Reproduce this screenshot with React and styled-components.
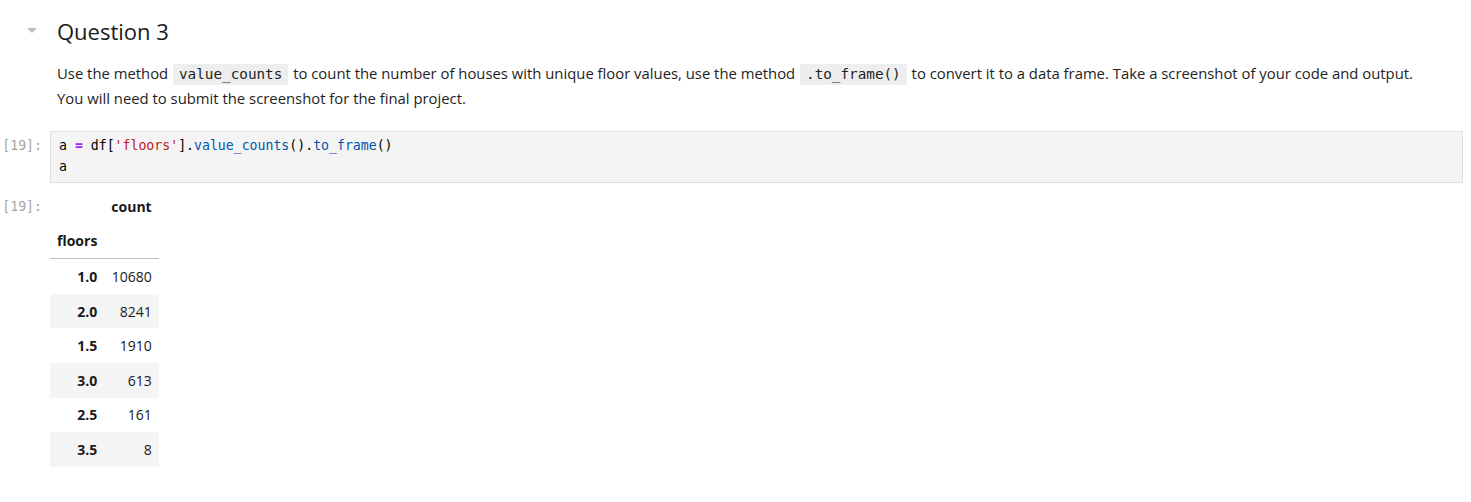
import React from "react";
import styled, { createGlobalStyle } from "styled-components";

const Global = createGlobalStyle`
  html, body { margin: 0; padding: 0; background: #fff; }
  body { font-family: "Open Sans", "Noto Sans", sans-serif; color: #212121; }
`;

const Notebook = styled.div`
  display: flex;
  flex-direction: column;
  padding: 0 8px 0 0;
`;

const HeadingRow = styled.div`
  display: flex;
  align-items: center;
  height: 61px;
`;

const Collapser = styled.div`
  width: 57px;
  display: flex;
  justify-content: flex-start;
  padding-left: 26px;
  box-sizing: border-box;
`;

const Heading = styled.h2`
  margin: 0;
  font-size: 22px;
  font-weight: 500;
  color: #1a1a1a;
`;

const Para = styled.p`
  margin: 0 0 0 57px;
  font-size: 14.85px;
  line-height: 25px;
  color: #1e1e1e;
`;

const InlineCode = styled.code`
  font-family: "DejaVu Sans Mono", monospace;
  font-size: 14.3px;
  line-height: 1;
  background: #eeeeee;
  padding: 2px 6px 3px;
  margin: 0 1px;
`;

const CellRow = styled.div`
  display: flex;
  align-items: flex-start;
  margin-top: ${(p) => p.$top}px;
`;

const Prompt = styled.div`
  width: 50px;
  flex: none;
  box-sizing: border-box;
  padding-right: 8px;
  text-align: right;
  font-family: "DejaVu Sans Mono", monospace;
  font-size: 13.2px;
  color: #a5a5a5;
  line-height: 21px;
  padding-top: ${(p) => p.$pt}px;
`;

const Editor = styled.pre`
  flex: 1;
  margin: 0;
  background: #f4f4f4;
  border: 1px solid #e0e0e0;
  padding: 3px 8px 5px;
  font-family: "DejaVu Sans Mono", monospace;
  font-size: 13.2px;
  line-height: 21px;
  color: #000;
`;

const Op = styled.span`
  color: #aa22ff;
  font-weight: bold;
`;
const Str = styled.span`
  color: #ba2121;
`;
const Prop = styled.span`
  color: #0055aa;
`;

const Table = styled.table`
  border-collapse: collapse;
  font-size: 14px;
  font-family: "Open Sans", sans-serif;
  color: #1a1a1a;
`;

const Th = styled.th`
  text-align: right;
  font-weight: 700;
  padding: 0 7px;
  height: 34.6px;
  line-height: 21px;
`;

const Td = styled.td`
  text-align: right;
  padding: 0 7px;
  height: 34.6px;
  line-height: 21px;
`;

const HeadRow = styled.tr`
  border-bottom: ${(p) => (p.$rule ? "1px solid #bdbdbd" : "none")};
`;

const BodyRow = styled.tr`
  background: ${(p) => (p.$odd ? "#f5f5f5" : "transparent")};
`;

const rows = [
  ["1.0", "10680"],
  ["2.0", "8241"],
  ["1.5", "1910"],
  ["3.0", "613"],
  ["2.5", "161"],
  ["3.5", "8"],
];

export default function App() {
  return (
    <Notebook>
      <Global />
      <HeadingRow>
        <Collapser>
          <svg width="12" height="7" viewBox="0 0 12 7">
            <path d="M1 1 L11 1 L6 6 Z" fill="#bdbdbd" />
          </svg>
        </Collapser>
        <Heading>Question 3</Heading>
      </HeadingRow>
      <Para>
        Use the method <InlineCode>value_counts</InlineCode> to count the number of houses with unique floor values, use the method{" "}
        <InlineCode>.to_frame()</InlineCode> to convert it to a data frame. Take a screenshot of your code and output.
        <br />
        You will need to submit the screenshot for the final project.
      </Para>
      <CellRow $top={20}>
        <Prompt $pt={4}>[19]:</Prompt>
        <Editor>
          a <Op>=</Op> df[<Str>'floors'</Str>].<Prop>value_counts</Prop>().<Prop>to_frame</Prop>()
          {"\n"}a
        </Editor>
      </CellRow>
      <CellRow $top={6}>
        <Prompt $pt={7}>[19]:</Prompt>
        <Table>
          <thead>
            <HeadRow>
              <Th />
              <Th>count</Th>
            </HeadRow>
            <HeadRow $rule>
              <Th>floors</Th>
              <Th />
            </HeadRow>
          </thead>
          <tbody>
            {rows.map(([k, v], i) => (
              <BodyRow key={k} $odd={i % 2 === 1}>
                <Th>{k}</Th>
                <Td>{v}</Td>
              </BodyRow>
            ))}
          </tbody>
        </Table>
      </CellRow>
    </Notebook>
  );
}
